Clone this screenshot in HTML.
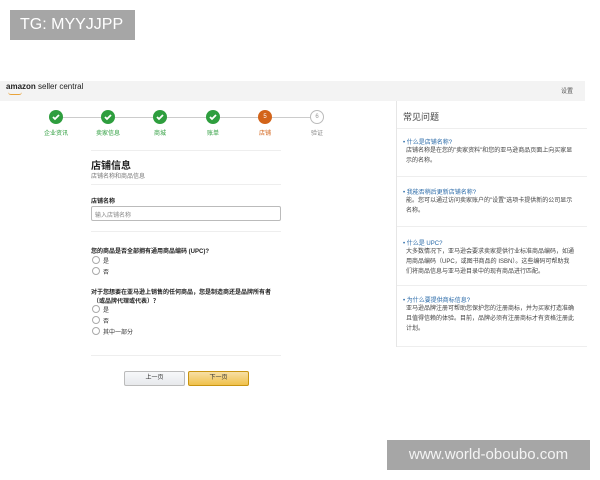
<!DOCTYPE html>
<html><head><meta charset="utf-8"><style>
*{margin:0;padding:0;box-sizing:border-box}
body{width:600px;height:480px;background:#fff;position:relative;overflow:hidden;font-family:"Liberation Sans","Noto Sans CJK SC",sans-serif;color:#333}
.a{position:absolute;white-space:nowrap}
.s{font-size:6px}
.c{position:absolute;width:14px;height:14px;border-radius:50%;background:#2e9e3e;top:110px}
.c svg{position:absolute;left:3px;top:3px}
.lbl{position:absolute;top:128px;font-size:6px;color:#2e9e3e;width:40px;text-align:center}
.r{position:absolute;width:8px;height:8px;border-radius:50%;border:1px solid #aaa;left:92px}
.hr{position:absolute;height:1px;background:#eee}
.lk{color:#2a6aa8;font-size:6px}
.t{font-size:6px;color:#444;line-height:10px}
</style></head><body>
<div class="a" style="left:10px;top:10px;width:125px;height:30px;background:#a6a6a6;color:#fff;font-size:16px;line-height:30px;padding-left:10px">TG: MYYJJPP</div>
<div class="a" style="left:387px;top:440px;width:203px;height:30px;background:#a6a6a6;color:#f4f4f4;font-size:15px;line-height:30px;text-align:center">www.world-oboubo.com</div>

<div class="a" style="left:0;top:81px;width:585px;height:20px;background:#f3f3f3"></div>
<div class="a" style="left:6px;top:82px;font-size:8px;color:#222"><b>amazon</b> seller central</div>
<div class="a" style="left:8px;top:92px;width:14px;height:3px;border-bottom:1px solid #e8a33a;border-radius:0 0 8px 8px"></div>
<div class="a s" style="left:561px;top:86px;color:#555">设置</div>

<div class="a" style="left:60px;top:117px;width:256px;height:1px;background:#ccc"></div>
<div class="c" style="left:49px"><svg width="8" height="8"><path d="M1 4l2 2 4-4" stroke="#fff" stroke-width="1.8" fill="none"/></svg></div>
<div class="c" style="left:101px"><svg width="8" height="8"><path d="M1 4l2 2 4-4" stroke="#fff" stroke-width="1.8" fill="none"/></svg></div>
<div class="c" style="left:153px"><svg width="8" height="8"><path d="M1 4l2 2 4-4" stroke="#fff" stroke-width="1.8" fill="none"/></svg></div>
<div class="c" style="left:206px"><svg width="8" height="8"><path d="M1 4l2 2 4-4" stroke="#fff" stroke-width="1.8" fill="none"/></svg></div>
<div class="c" style="left:258px;background:#d3641a;color:#fff;font-size:6px;text-align:center;line-height:14px">5</div>
<div class="c" style="left:310px;background:#fff;border:1px solid #bbb;color:#999;font-size:6px;text-align:center;line-height:12px">6</div>
<div class="lbl" style="left:36px">企业资讯</div>
<div class="lbl" style="left:88px">卖家信息</div>
<div class="lbl" style="left:140px">商城</div>
<div class="lbl" style="left:193px">账单</div>
<div class="lbl" style="left:245px;color:#d3641a">店铺</div>
<div class="lbl" style="left:297px;color:#888">验证</div>

<div class="hr" style="left:91px;top:150px;width:190px"></div>
<div class="a" style="left:91px;top:157px;font-size:10px;font-weight:bold;color:#222">店铺信息</div>
<div class="a s" style="left:91px;top:171px;color:#777">店铺名称和商品信息</div>
<div class="hr" style="left:91px;top:184px;width:190px"></div>
<div class="a s" style="left:91px;top:196px;font-weight:bold;color:#222">店铺名称</div>
<div class="a" style="left:91px;top:206px;width:190px;height:15px;border:1px solid #bbb;border-radius:2px;font-size:6px;color:#888;padding:3px 3px">输入店铺名称</div>
<div class="hr" style="left:91px;top:231px;width:190px"></div>
<div class="a s" style="left:91px;top:246px;font-weight:bold;color:#222">您的商品是否全部拥有通用商品编码 (UPC)?</div>
<div class="r" style="top:256px"></div><div class="a s" style="left:103px;top:256px">是</div>
<div class="r" style="top:267px"></div><div class="a s" style="left:103px;top:267px">否</div>
<div class="a s" style="left:91px;top:287px;font-weight:bold;color:#222">对于您想要在亚马逊上销售的任何商品，您是制造商还是品牌所有者</div>
<div class="a s" style="left:93px;top:296px;font-weight:bold;color:#222">（或品牌代理或代表）？</div>
<div class="r" style="top:305px"></div><div class="a s" style="left:103px;top:305px">是</div>
<div class="r" style="top:316px"></div><div class="a s" style="left:103px;top:316px">否</div>
<div class="r" style="top:327px"></div><div class="a s" style="left:103px;top:327px">其中一部分</div>
<div class="hr" style="left:91px;top:355px;width:190px"></div>
<div class="a s" style="left:124px;top:371px;width:61px;height:15px;border:1px solid #bbb;border-radius:2px;background:linear-gradient(#f7f8fa,#e7e9ec);text-align:center;line-height:13px">上一页</div>
<div class="a s" style="left:188px;top:371px;width:61px;height:15px;border:1px solid #c89411;border-radius:2px;background:linear-gradient(#f7dfa5,#f0c14b);text-align:center;line-height:13px">下一页</div>

<div class="a" style="left:396px;top:101px;width:1px;height:246px;background:#e6e6e6"></div>
<div class="a" style="left:403px;top:110px;font-size:9px;color:#444">常见问题</div>
<div class="hr" style="left:397px;top:128px;width:190px"></div>
<div class="a lk" style="left:403px;top:137px">• 什么是店铺名称?</div>
<div class="a t" style="left:406px;top:146px">店铺名称是在您的"卖家资料"和您的亚马逊商品页面上向买家显<br>示的名称。</div>
<div class="hr" style="left:397px;top:176px;width:190px"></div>
<div class="a lk" style="left:403px;top:187px">• 我能否稍后更新店铺名称?</div>
<div class="a t" style="left:406px;top:196px">能。您可以通过访问卖家账户的"设置"选项卡提供新的公司显示<br>名称。</div>
<div class="hr" style="left:397px;top:226px;width:190px"></div>
<div class="a lk" style="left:403px;top:238px">• 什么是 UPC?</div>
<div class="a t" style="left:406px;top:247px">大多数情况下，亚马逊会要求卖家提供行业标准商品编码，如通<br>用商品编码（UPC，或图书商品的 ISBN）。这些编码可帮助我<br>们将商品信息与亚马逊目录中的现有商品进行匹配。</div>
<div class="hr" style="left:397px;top:285px;width:190px"></div>
<div class="a lk" style="left:403px;top:295px">• 为什么要提供商标信息?</div>
<div class="a t" style="left:406px;top:304px">亚马逊品牌注册可帮助您保护您的注册商标，并为买家打造准确<br>且值得信赖的体验。目前，品牌必须有注册商标才有资格注册此<br>计划。</div>
<div class="hr" style="left:397px;top:346px;width:190px"></div>
</body></html>
